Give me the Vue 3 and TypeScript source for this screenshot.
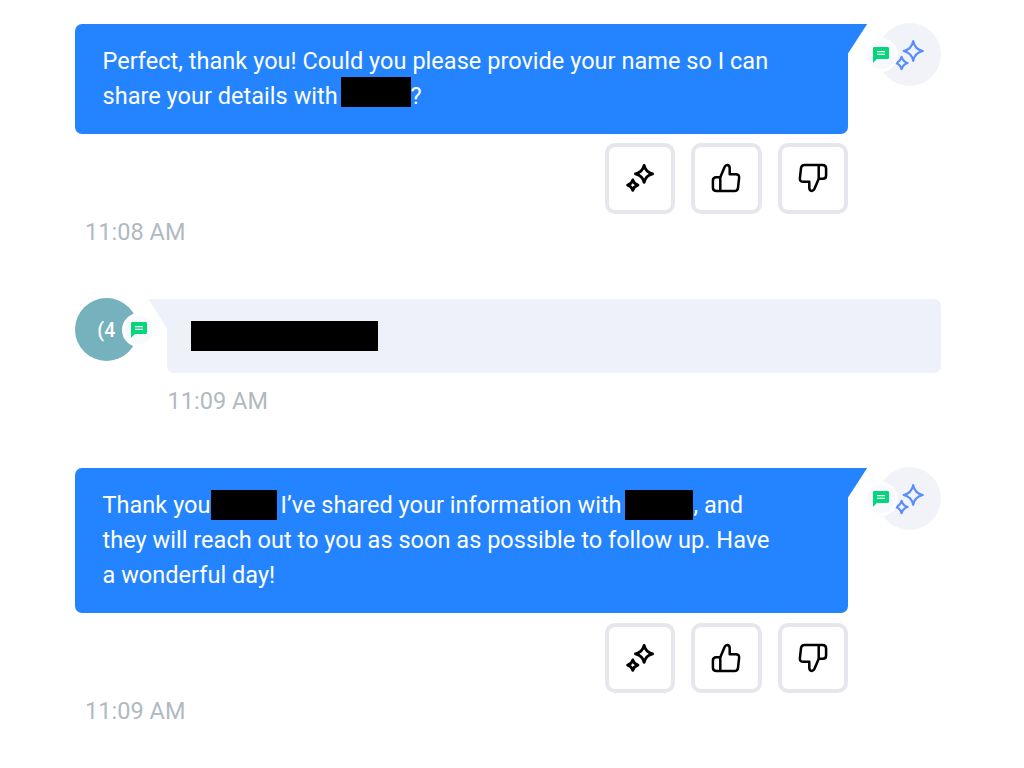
<script setup lang="ts">
interface Part {
  text?: string
  block?: number
  before?: number
}
interface Message {
  id: number
  side: 'agent' | 'visitor'
  time: string
  initials?: string
  lines: Part[][]
}

const messages: Message[] = [
  {
    id: 1,
    side: 'agent',
    time: '11:08 AM',
    lines: [
      [{ text: 'Perfect, thank you! Could you please provide your name so I can' }],
      [{ text: 'share your details with' }, { block: 70, before: 341 }, { text: '?', before: 410.5 }],
    ],
  },
  {
    id: 2,
    side: 'visitor',
    time: '11:09 AM',
    initials: '(4',
    lines: [[{ block: 187, before: 191 }]],
  },
  {
    id: 3,
    side: 'agent',
    time: '11:09 AM',
    lines: [
      [
        { text: 'Thank you' },
        { block: 66, before: 211 },
        { text: 'I’ve shared your information with', before: 280.5 },
        { block: 68, before: 625.4 },
        { text: ', and', before: 693.5 },
      ],
      [{ text: 'they will reach out to you as soon as possible to follow up. Have' }],
      [{ text: 'a wonderful day!' }],
    ],
  },
]

// Widths of the grid tracks in a line: every part starts at its own tab stop.
function tracks(line: Part[], side: Message['side']): string {
  const origin = side === 'agent' ? 102.5 : 191
  const stops = line.map((p) => p.before ?? origin)
  return stops
    .map((s, i) => (i + 1 < stops.length ? `${stops[i + 1] - s}px` : 'max-content'))
    .join(' ')
}
</script>

<template>
  <main class="chat">
    <section v-for="m in messages" :key="m.id" class="message" :class="m.side">
      <div class="row">
        <div v-if="m.side === 'visitor'" class="avatar">
          <span class="initials">{{ m.initials }}</span>
          <span class="badge">
            <svg viewBox="0 0 16 16" width="16" height="16">
              <path d="M1.3 0H14.7Q16 0 16 1.3V10.7Q16 12 14.7 12H3.8L0 16V1.3Q0 0 1.3 0Z" fill="#04d67b" />
              <path d="M4 4.7H12M4 7.4H12" stroke="#fff" stroke-width="1.3" />
            </svg>
          </span>
        </div>

        <div class="bubble">
          <div v-for="(line, i) in m.lines" :key="i" class="line" :style="{ gridTemplateColumns: tracks(line, m.side) }">
            <template v-for="(p, j) in line" :key="j">
              <span v-if="p.block" class="redacted" :style="{ width: p.block + 'px' }"></span>
              <span v-else>{{ p.text }}</span>
            </template>
          </div>
        </div>

        <div v-if="m.side === 'agent'" class="avatar">
          <svg class="spark" viewBox="0 0 30 32" width="30" height="32" fill="none" stroke="#5a8dfc" stroke-width="2.2" stroke-linejoin="round">
            <path d="M18.2 2.2C19.4 8 22.2 10.8 27.8 12C22.2 13.2 19.4 16 18.2 21.8C17 16 14.2 13.2 8.6 12C14.2 10.8 17 8 18.2 2.2Z" />
            <path d="M6.6 17.8C7.6 21.4 9.2 23 12.6 24C9.2 25 7.6 26.6 6.6 30.2C5.6 26.6 4 25 .8 24C4 23 5.6 21.4 6.6 17.8Z" />
          </svg>
          <span class="badge">
            <svg viewBox="0 0 16 16" width="16" height="16">
              <path d="M1.3 0H14.7Q16 0 16 1.3V10.7Q16 12 14.7 12H3.8L0 16V1.3Q0 0 1.3 0Z" fill="#04d67b" />
              <path d="M4 4.7H12M4 7.4H12" stroke="#fff" stroke-width="1.3" />
            </svg>
          </span>
        </div>
      </div>

      <div v-if="m.side === 'agent'" class="actions">
        <button type="button" aria-label="Improve">
          <svg viewBox="0 0 30 30" width="30" height="30" fill="none" stroke="#000" stroke-width="2.8" stroke-linejoin="round">
            <path d="M19.1 2.4C20.3 7.4 22.7 9.7 27.6 10.9C22.7 12.1 20.3 14.4 19.1 19.4C17.9 14.4 15.5 12.1 10.4 10.9C15.5 9.7 17.9 7.4 19.1 2.4Z" />
            <path d="M7.8 16.9C8.6 20 9.9 21.3 13 22.2C9.9 23.1 8.6 24.4 7.8 27.4C7 24.4 5.7 23.1 2.6 22.2C5.7 21.3 7 20 7.8 16.9Z" />
          </svg>
        </button>
        <button type="button" aria-label="Good reply">
          <svg viewBox="0 0 30 30" width="30" height="30" fill="none" stroke="#000" stroke-width="2.5" stroke-linejoin="round" stroke-linecap="round">
            <path d="M9.3 14.2L13.5 4.2C14.2 2.6 15 2 16.1 2C17.8 2.1 18.7 3.3 18.7 5.2V11.2H24.6C27.2 11.2 28.4 12.5 28.1 14.9L27 24.8C26.7 27 25.5 28.1 23.3 28.1H5.6C3 28.1 1.9 27 1.9 24.6V17.6C1.9 15.2 3 14.2 5.4 14.2H9.3V28.1" />
          </svg>
        </button>
        <button type="button" aria-label="Bad reply">
          <svg viewBox="0 0 30 30" width="30" height="30" fill="none" stroke="#000" stroke-width="2.5" stroke-linejoin="round" stroke-linecap="round">
            <path d="M20.7 15.8L16.5 25.8C15.8 27.4 15 28 13.9 28C12.2 27.9 11.3 26.7 11.3 24.8V18.8H5.4C2.8 18.8 1.6 17.5 1.9 15.1L3 5.2C3.3 3 4.5 1.9 6.7 1.9H24.4C27 1.9 28.1 3 28.1 5.4V12.4C28.1 14.8 27 15.8 24.6 15.8H20.7V1.9" />
          </svg>
        </button>
      </div>
      <time>{{ m.time }}</time>
    </section>
  </main>
</template>

<style>
html,
body {
  background: #fff;
}
</style>

<style scoped>
.chat {
  box-sizing: border-box;
  width: 1024px;
  height: 768px;
  padding: 23.5px 83px 0 75px;
  overflow: hidden;
  font-family: Roboto, "Liberation Sans", sans-serif;
  font-size: 23.5px;
  letter-spacing: 0.03px;
}
.message {
  display: flex;
  flex-direction: column;
}
.message.agent {
  height: 275px;
}
.message.visitor {
  height: 169px;
}
.row {
  display: flex;
  justify-content: space-between;
  align-items: flex-start;
}
.bubble {
  position: relative;
  box-sizing: border-box;
  width: 773px;
  padding: 19.5px 27.5px;
  border-radius: 7px 0 7px 7px;
  background: #2484ff;
  color: #fff;
}
.bubble::after {
  content: "";
  position: absolute;
  top: 0;
  left: calc(100% - 1px);
  width: 20.5px;
  height: 30px;
  background: inherit;
  clip-path: polygon(0 0, 100% 0, 1px 100%, 0 100%);
}
.visitor .bubble {
  width: 774px;
  padding: 19.5px 24px;
  border-radius: 0 7px 7px 7px;
  background: #eef1fa;
}
.visitor .bubble::after {
  left: -19px;
  width: 20px;
  clip-path: polygon(0 0, 100% 0, 100% 100%, 19px 100%);
}
.line {
  display: grid;
  align-items: start;
  height: 35.5px;
  line-height: 35.5px;
  white-space: nowrap;
}
.agent .line:first-child {
  line-height: 37px;
}
.redacted {
  height: 30px;
  margin-top: -1.5px;
  background: #000;
}
.agent .line:first-child .redacted,
.visitor .line .redacted {
  margin-top: 3px;
}
.avatar {
  position: relative;
  display: flex;
  align-items: center;
  justify-content: center;
  width: 63px;
  height: 63px;
  margin-top: -0.5px;
  border-radius: 50%;
  background: #f1f3f8;
}
.visitor .avatar {
  background: #76b2bd;
}
.initials {
  padding-top: 2px;
  color: #fff;
  font-size: 19.5px;
  font-weight: 500;
  line-height: 24px;
  letter-spacing: 0.3px;
}
.spark {
  overflow: visible;
}
.badge {
  position: absolute;
  top: 14.5px;
  left: -14px;
  box-sizing: border-box;
  display: flex;
  align-items: center;
  justify-content: center;
  width: 34px;
  height: 34px;
  border: 3px solid #fff;
  border-radius: 50%;
  background: #f7f9fd;
}
.visitor .badge {
  left: 47px;
}
.actions {
  display: flex;
  gap: 16px;
  justify-content: flex-end;
  margin: 9.5px 93px 0 0;
}
.actions button {
  box-sizing: border-box;
  display: flex;
  align-items: center;
  justify-content: center;
  width: 70.5px;
  height: 70.5px;
  padding: 0;
  border: 4px solid #e5e7ec;
  border-radius: 10px;
  background: #fff;
}
time {
  margin: 4px 0 0 10px;
  color: #b0babf;
  line-height: 28px;
}
.visitor time {
  margin: 13.5px 0 0 92.5px;
}
</style>
